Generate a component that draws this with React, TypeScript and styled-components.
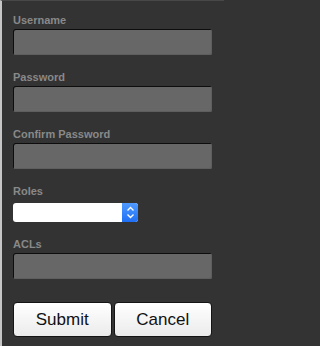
import { FunctionComponent } from 'react';
import styled, { createGlobalStyle } from 'styled-components';

const GlobalStyle = createGlobalStyle`
  html, body {
    margin: 0;
    padding: 0;
    background: #333333;
  }
`;

const Panel = styled.form`
  box-sizing: border-box;
  width: 224px;
  height: 346px;
  background: #333333;
  border-left: 2px solid #c6c6c6;
  border-top: 1px solid #484848;
  padding: 13px 0 0 11px;
  display: flex;
  flex-direction: column;
  font-family: 'Liberation Sans', Arial, sans-serif;
`;

const Field = styled.div<{ $gap?: number }>`
  width: 199px;
  display: flex;
  flex-direction: column;
  gap: ${(p) => p.$gap ?? 2}px;
  margin-bottom: 16px;
`;

const Label = styled.label`
  display: block;
  height: 13px;
  line-height: 13px;
  font-size: 11px;
  font-weight: bold;
  color: #898989;
`;

const TextInput = styled.input`
  box-sizing: border-box;
  width: 199px;
  height: 26px;
  margin: 0;
  padding: 0 4px;
  border: none;
  border-radius: 2px;
  background: #676767;
  box-shadow: inset 1px 1px 0 #0d0d0d, inset -1px -1px 0 #5e5e5e;
  color: #eee;
  outline: none;
`;

const SelectBox = styled.div`
  position: relative;
  box-sizing: border-box;
  width: 125px;
  height: 19px;
  border-radius: 3px;
  background: #ffffff;
  overflow: hidden;
`;

const Stepper = styled.span`
  position: absolute;
  top: 0;
  right: 0;
  width: 16px;
  height: 19px;
  display: flex;
  align-items: center;
  justify-content: center;
  background: linear-gradient(#4f9bff, #1f6ff5);
`;

const Actions = styled.div`
  display: flex;
  gap: 2px;
  width: 199px;
  margin-top: 7px;
`;

const Button = styled.button`
  flex: 1;
  height: 35px;
  margin: 0;
  padding: 0;
  border: 1px solid #141414;
  border-radius: 4px;
  background: linear-gradient(#ffffff, #ebebeb);
  font-family: 'Liberation Sans', Arial, sans-serif;
  font-size: 17px;
  color: #111111;
`;

const App: FunctionComponent = () => {
  return (
    <>
      <GlobalStyle />
      <Panel onSubmit={(e) => e.preventDefault()}>
        <Field>
          <Label>Username</Label>
          <TextInput type="text" />
        </Field>
        <Field>
          <Label>Password</Label>
          <TextInput type="password" />
        </Field>
        <Field>
          <Label>Confirm Password</Label>
          <TextInput type="password" />
        </Field>
        <Field $gap={5}>
          <Label>Roles</Label>
          <SelectBox>
            <Stepper>
              <svg width="9" height="13" viewBox="0 0 9 13" fill="none" stroke="#fff" strokeWidth="1.4">
                <path d="M1.5 4.5 L4.5 1.5 L7.5 4.5" />
                <path d="M1.5 8.5 L4.5 11.5 L7.5 8.5" />
              </svg>
            </Stepper>
          </SelectBox>
        </Field>
        <Field>
          <Label>ACLs</Label>
          <TextInput type="text" />
        </Field>
        <Actions>
          <Button type="submit">Submit</Button>
          <Button type="button">Cancel</Button>
        </Actions>
      </Panel>
    </>
  );
};

export default App;
